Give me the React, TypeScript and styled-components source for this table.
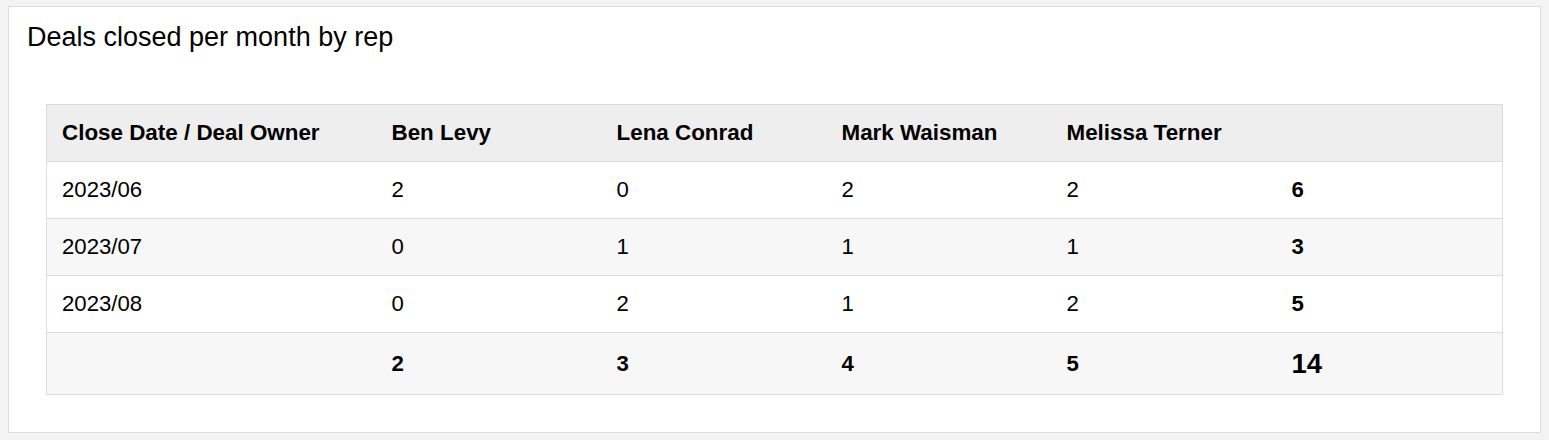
import React from "react";
import styled, { createGlobalStyle } from "styled-components";

const Global = createGlobalStyle`
  html, body { margin: 0; padding: 0; background: #f3f3f3; }
  body { font-family: "Liberation Sans", Arial, sans-serif; color: #000; }
`;

const Page = styled.div`
  padding: 6px 8px 7px 8px;
`;

const Card = styled.section`
  background: #fff;
  border: 1px solid #dcdcdc;
  padding: 14px 37px 37px 37px;
`;

const Title = styled.h2`
  margin: 0 0 0 -19px;
  font-size: 27px;
  font-weight: 400;
  line-height: 32px;
`;

const Table = styled.table`
  margin-top: 51px;
  width: 100%;
  border-collapse: collapse;
  border: 1px solid #dcdcdc;
  table-layout: fixed;
`;

const Row = styled.tr<{ $bg: string }>`
  background: ${(p) => p.$bg};
  border-bottom: 1px solid #dcdcdc;
`;

const Th = styled.th`
  text-align: left;
  font-size: 22.4px;
  font-weight: 700;
  line-height: 24px;
  padding: 16px 15px;
`;

const Td = styled.td<{ $bold?: boolean; $big?: boolean }>`
  text-align: left;
  font-size: ${(p) => (p.$big ? "27.5px" : "22.2px")};
  font-weight: ${(p) => (p.$bold ? 700 : 400)};
  line-height: ${(p) => (p.$big ? "29px" : "24px")};
  padding: 16px 15px;
`;

const reps = ["Ben Levy", "Lena Conrad", "Mark Waisman", "Melissa Terner"];
const rows: { month: string; values: number[]; total: number }[] = [
  { month: "2023/06", values: [2, 0, 2, 2], total: 6 },
  { month: "2023/07", values: [0, 1, 1, 1], total: 3 },
  { month: "2023/08", values: [0, 2, 1, 2], total: 5 },
];
const totals = [2, 3, 4, 5];
const grand = 14;

export default function App() {
  return (
    <>
      <Global />
      <Page>
        <Card>
          <Title>Deals closed per month by rep</Title>
          <Table>
            <colgroup>
              <col style={{ width: 330 }} />
              <col style={{ width: 225 }} />
              <col style={{ width: 225 }} />
              <col style={{ width: 225 }} />
              <col style={{ width: 225 }} />
              <col />
            </colgroup>
            <thead>
              <Row $bg="#eeeeee">
                <Th>Close Date / Deal Owner</Th>
                {reps.map((r) => (
                  <Th key={r}>{r}</Th>
                ))}
                <Th />
              </Row>
            </thead>
            <tbody>
              {rows.map((r, i) => (
                <Row key={r.month} $bg={i % 2 === 0 ? "#ffffff" : "#f7f7f7"}>
                  <Td>{r.month}</Td>
                  {r.values.map((v, j) => (
                    <Td key={j}>{v}</Td>
                  ))}
                  <Td $bold>{r.total}</Td>
                </Row>
              ))}
              <Row $bg="#f7f7f7">
                <Td />
                {totals.map((t, j) => (
                  <Td key={j} $bold>
                    {t}
                  </Td>
                ))}
                <Td $bold $big>
                  {grand}
                </Td>
              </Row>
            </tbody>
          </Table>
        </Card>
      </Page>
    </>
  );
}
